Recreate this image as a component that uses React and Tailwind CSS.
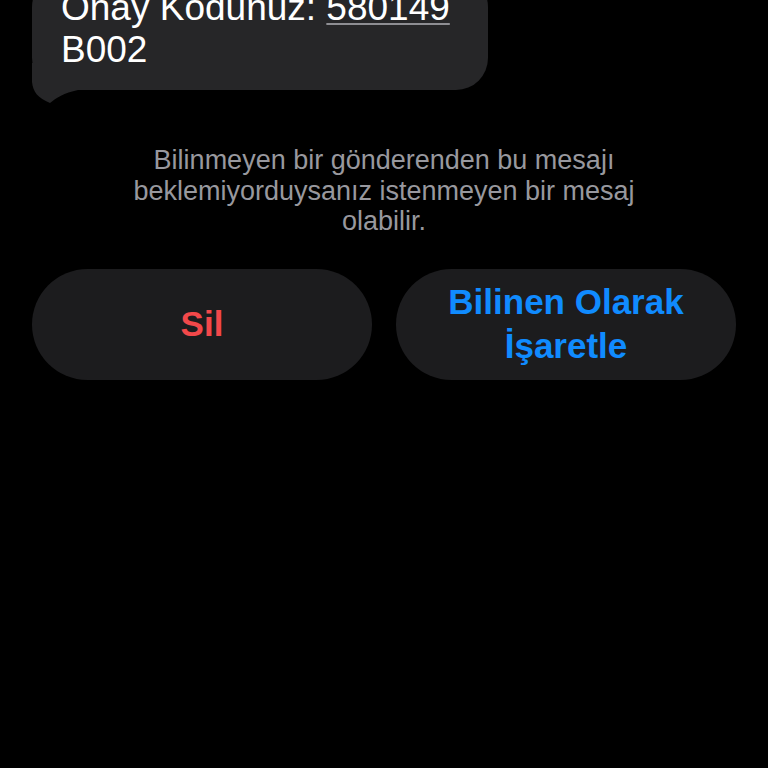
export default function App() {
  return (
    <div className="h-[768px] w-[768px] overflow-hidden bg-black" style={{ fontFamily: '"Liberation Sans", Arial, sans-serif' }}>
      <div className="relative ml-[32px] mt-[-25px] w-[456px] rounded-[32px] bg-[#262628] pb-[19px] pl-[29px] pt-[12px] text-[37px] leading-[42px] text-white">
        <svg className="absolute left-0 top-[88px]" width="50" height="46" viewBox="0 0 50 46">
          <path d="M0 0 L0 19 C1 29 6 35 18 40 C24 35 32 30 46 27 L46 0 Z" fill="#262628" />
        </svg>
        <div className="relative whitespace-nowrap">
          Onay Kodunuz:{" "}
          <span className="underline decoration-[#8e8e93] decoration-2 underline-offset-[3px]">580149</span>
        </div>
        <div className="relative">B002</div>
      </div>
      <div className="mt-[55px] text-center text-[27px] leading-[30.5px] text-[#98989e]">
        <div>Bilinmeyen bir gönderenden bu mesajı</div>
        <div>beklemiyorduysanız istenmeyen bir mesaj</div>
        <div>olabilir.</div>
      </div>
      <div className="mx-[32px] mt-[32px] grid grid-cols-2 gap-[24px]">
        <button className="flex h-[111px] items-center justify-center rounded-full bg-[#1c1c1e] text-[35px] font-bold leading-[44px] text-[#f2484a]">
          Sil
        </button>
        <button className="flex h-[111px] flex-col items-center justify-center rounded-full bg-[#1c1c1e] text-[35px] font-bold leading-[44px] text-[#108bff]">
          <span>Bilinen Olarak</span>
          <span>İşaretle</span>
        </button>
      </div>
    </div>
  );
}
